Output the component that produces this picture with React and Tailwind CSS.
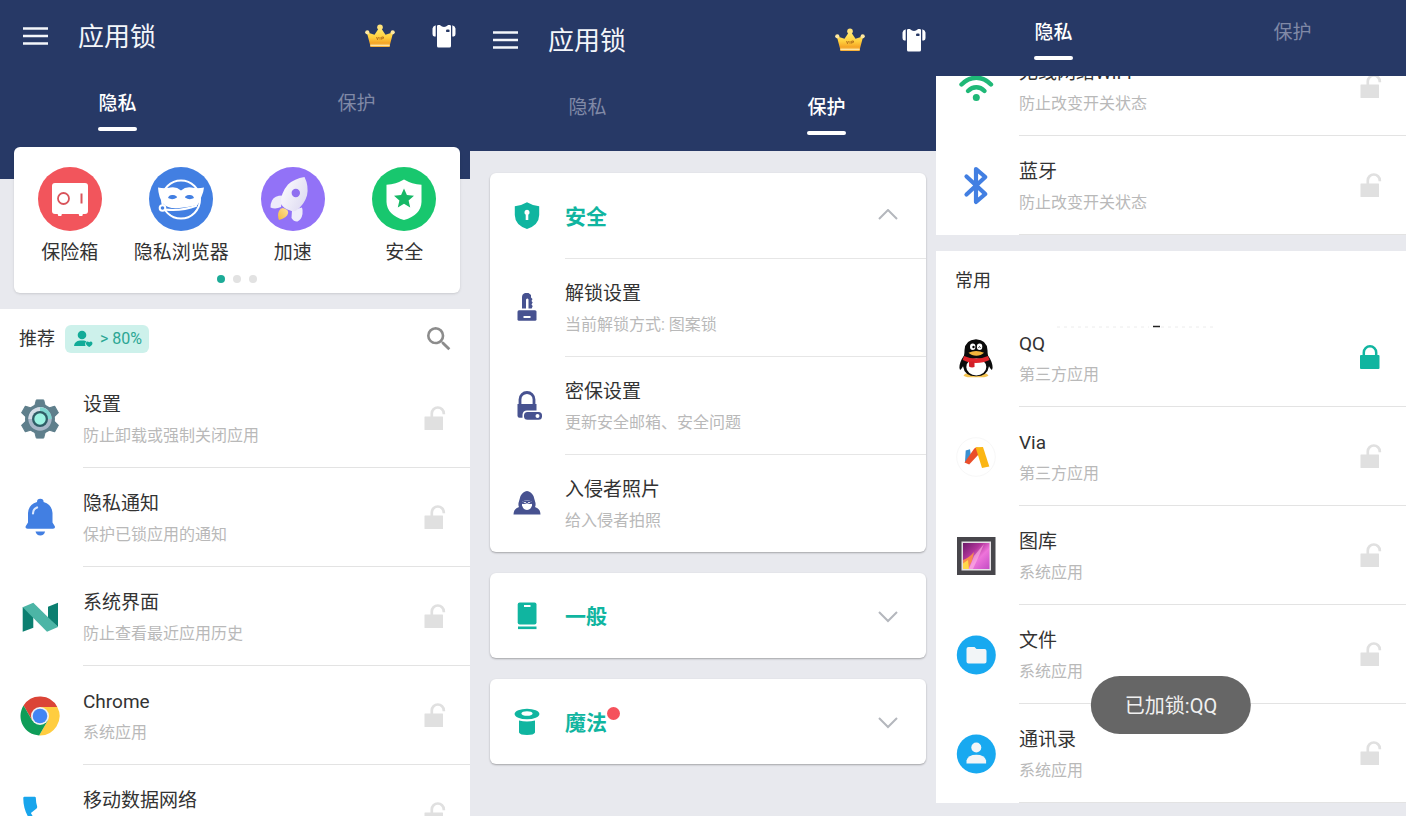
import { useState } from "react";
import { MdSearch } from "react-icons/md";

/* ---------- header icons ---------- */

function CrownIcon() {
  return (
    <svg width="30" height="24" viewBox="0 0 30 24" aria-hidden="true">
      <defs>
        <linearGradient id="crownGold" x1="0" y1="0" x2="0" y2="1">
          <stop offset="0" stopColor="#fff07a" />
          <stop offset="0.600" stopColor="#ffcf3d" />
          <stop offset="1" stopColor="#f39a1f" />
        </linearGradient>
      </defs>
      <path d="M1.800 8.300 9.500 10.800 15 2.500l5.500 8.300 7.700-2.500-3.200 12.200H5z" fill="url(#crownGold)" />
      <circle cx="2.300" cy="8.300" r="2.100" fill="#ffe9a0" />
      <circle cx="15" cy="3.200" r="2.800" fill="#ffe37a" />
      <circle cx="27.700" cy="8.300" r="2.100" fill="#ffe9a0" />
      <rect x="5" y="19.500" width="20" height="3.500" rx="1" fill="#f6b13a" />
      <path d="M5.500 21.300h19" stroke="#ffe9b0" strokeWidth="1.200" />
      <path d="m11.500 13 1 2.700 1-2.700M15 13v2.700M16.700 15.700V13h1.800v1.300h-1.800" fill="none" stroke="#a8641a" strokeWidth="0.800" />
    </svg>
  );
}

function ShirtIcon() {
  return (
    <svg width="24" height="24" viewBox="0 0 24 24" aria-hidden="true" fill="#fff">
      <path d="M5 2Q5.200.8 6.300.9h1.500L10 2.600q2 .8 4 0L16.200.9h1.500Q18.800.8 19 2v20q0 1.500-1.500 1.500h-11Q5 23.500 5 22z" />
      <path d="M3.700 1.200V12.500H2.200Q.5 12 .5 10V4.500Q.8 2 3.700 1.200zM20.300 1.200v11.300h1.500q1.700-.5 1.700-2.500V4.500Q23.200 2 20.300 1.200z" />
      <rect x="14" y="5.500" width="3.600" height="2.600" rx="1.200" fill="#273966" />
    </svg>
  );
}

/* ---------- shortcut icons ---------- */

function SafeIcon() {
  return (
    <svg width="64" height="64" viewBox="0 0 64 64" aria-hidden="true">
      <circle cx="32" cy="32" r="32" fill="#f2555c" />
      <rect x="14" y="16" width="36" height="31" rx="3" fill="#fff" />
      <path d="M19.500 46.500h4.500l-.7 2.500h-3zM40.500 46.500H45l-.7 2.500h-3z" fill="#fff" />
      <circle cx="25.500" cy="31.500" r="5.500" fill="none" stroke="#d9545b" strokeWidth="1.800" />
      <path d="M43.500 26.500v10" stroke="#d9545b" strokeWidth="2" />
    </svg>
  );
}

function MaskIcon() {
  return (
    <svg width="64" height="64" viewBox="0 0 64 64" aria-hidden="true">
      <circle cx="32" cy="32" r="32" fill="#427fe2" />
      <circle cx="32" cy="32.500" r="19" fill="none" stroke="#fff" strokeWidth="2" />
      <path d="M9 20.500q7 1.500 12.500 0 6-1 10.500 3 4.500-4 10.500-3 5.500 1.500 12.500 0-.5 5-2.500 9-2 6-4 8.500-8 2-18 3-12 1-16-4-5-6-5.500-16.500z" fill="#fff" />
      <path d="M19 31q1-3.500 5-3 4 .5 4 2.500-4.500 3-9 .5zM45 31q-1-3.500-5-3-4 .5-4 2.500 4.500 3 9 .5z" fill="#427fe2" />
      <path d="M17.500 43.500q15 2 30-4-3 9-13 10-12 .5-17-6z" fill="#427fe2" />
      <circle cx="13.500" cy="41" r="2.800" fill="#427fe2" stroke="#fff" strokeWidth="2" />
      <path d="M16 42.500q16 2 32-4" fill="none" stroke="#fff" strokeWidth="2" />
    </svg>
  );
}

function RocketIcon() {
  return (
    <svg width="64" height="64" viewBox="0 0 64 64" aria-hidden="true">
      <defs>
        <linearGradient id="rocketBody" x1="0" y1="0" x2="1" y2="0.600">
          <stop offset="0" stopColor="#fff" />
          <stop offset="1" stopColor="#dfdcf2" />
        </linearGradient>
        <linearGradient id="rocketFlame" x1="1" y1="0" x2="0" y2="1">
          <stop offset="0" stopColor="#ffe39a" />
          <stop offset="1" stopColor="#f5b942" />
        </linearGradient>
      </defs>
      <circle cx="32" cy="32" r="32" fill="#9272f7" />
      <path d="M21.500 28.500q-8 0-10.500 5-2 4-1.500 7 5 2 10.500-.5zM31 43l-.5 8q2.500 4 6 3.500 4-2 5-7.500.5-4-.5-6.500z" fill="#eeecfb" />
      <path d="M18 44q2-4 5.500-2.500 4.500 1.500 3.500 5-1 4-9 6.500-2-5 0-9z" fill="url(#rocketFlame)" />
      <path d="M43.500 10q4.500 9 2.500 18.500-3 10-11.500 15.500-3 .5-6-.7-6-2-8.500-6.300-.5-11 7-19.500Q33.500 11.500 43.500 10z" fill="url(#rocketBody)" />
      <circle cx="34.800" cy="26" r="4.200" fill="#8f6ff0" />
    </svg>
  );
}

function StarShieldIcon() {
  return (
    <svg width="64" height="64" viewBox="0 0 64 64" aria-hidden="true">
      <circle cx="32" cy="32" r="32" fill="#18c76e" />
      <path d="M32 12.500q8 4.700 17.500 5.200V35q-.5 13-17.500 18-17-5-17.500-18V17.700q9.500-.5 17.500-5.200z" fill="#fff" />
      <path d="m32 21.500 2.900 6.600 7.100.7-5.400 4.700 1.600 7-6.200-3.700-6.200 3.700 1.600-7-5.400-4.700 7.100-.7z" fill="#16b866" />
    </svg>
  );
}

/* ---------- list icons (40 x 40) ---------- */

function GearIcon() {
  return (
    <svg width="40" height="40" viewBox="0 0 40 40" aria-hidden="true">
      <g fill="#5f7f8c">
        <circle cx="20" cy="20" r="15" />
        {[0, 60, 120, 180, 240, 300].map((a) => (
          <path key={a} d="M16.300.9h7.400l1.800 7h-11z" strokeLinejoin="round" stroke="#5f7f8c" strokeWidth="1" transform={`rotate(${a} 20 20)`} />
        ))}
      </g>
      <circle cx="20" cy="20" r="11.700" fill="#a9b7c8" />
      <path d="M8.300 20a11.700 11.700 0 0 1 20-8.300L20 20z" fill="#d5dde6" />
      <path d="M20 8.300A11.700 11.700 0 0 1 31.700 20H20z" fill="#7fd6d0" />
      <circle cx="20" cy="20" r="8" fill="#2f5d66" />
      <circle cx="20" cy="20" r="5.700" fill="#9cf3e2" />
    </svg>
  );
}

function BellIcon() {
  return (
    <svg width="40" height="40" viewBox="0 0 40 40" aria-hidden="true">
      <path d="M17 4a3.300 3.300 0 0 1 6.600 0q8.400 2.500 8.900 11v9.500l2.300 3.700q.8 2.500-1.800 2.500H7.500q-2.600 0-1.800-2.500L8 24.500V15q.5-8.500 9-11z" fill="#427fe2" />
      <path d="M15.500 33.500h9.600q-1 4-4.800 4t-4.800-4z" fill="#427fe2" />
      <path d="M13 15.500q0-4.500 4-6" fill="none" stroke="#dbe8ff" strokeWidth="2.200" strokeLinecap="round" />
    </svg>
  );
}

function NougatIcon() {
  return (
    <svg width="40" height="40" viewBox="0 0 40 40" aria-hidden="true">
      <path d="M2.700 10 13.300 16v14.700L2.700 34.700z" fill="#0b7f70" />
      <path d="M28 9.700 38 5.700V30L28 21z" fill="#0b7f70" />
      <path d="M2.700 10.300 13.300 5.700 38 30l-11 4.700z" fill="#4cb5a6" />
    </svg>
  );
}

function ChromeIcon() {
  return (
    <svg width="40" height="40" viewBox="0 0 40 40" aria-hidden="true">
      <path d="M12.200 24.500 3.550 9.520A19.500 19.500 0 0 1 37.300 11H20z" fill="#db4437" />
      <path d="M20 11h17.300a19.500 19.500 0 0 1-18.160 28.480L27.790 24.500z" fill="#ffcd40" />
      <path d="M27.790 24.500 19.140 39.480A19.500 19.500 0 0 1 3.550 9.520L12.200 24.500z" fill="#0f9d58" />
      <circle cx="20" cy="20" r="9" fill="#f1f1f1" />
      <circle cx="20" cy="20" r="7.300" fill="#4285f4" />
    </svg>
  );
}

function PhoneIcon() {
  return (
    <svg width="40" height="40" viewBox="0 0 40 40" aria-hidden="true">
      <path
        transform="translate(-3 -4.600) scale(2.100)"
        fill="#18a5ec"
        d="M6.620 10.790c1.440 2.830 3.760 5.140 6.590 6.590l2.200-2.200c.27-.27.67-.36 1.020-.24 1.120.37 2.330.57 3.570.57.55 0 1 .45 1 1V20c0 .55-.45 1-1 1C10.610 21 3 13.390 3 4c0-.55.0-1 .5-1h5c.4 0 .5.450.5 1 0 1.250.2 2.450.57 3.570.11.35.03.74-.25 1.020z"
      />
    </svg>
  );
}

function WifiIcon() {
  return (
    <svg width="40" height="40" viewBox="0 0 40 40" aria-hidden="true" fill="none" stroke="#1fb877" strokeWidth="4.400" strokeLinecap="round">
      <path d="M5.500 17.500Q12 10.700 20.300 10.700T35 17.500" />
      <path d="M12 24q3.700-3.700 8.300-3.700T28.500 24" />
      <circle cx="20.300" cy="30.500" r="3.500" fill="#1fb877" stroke="none" />
    </svg>
  );
}

function BluetoothIcon() {
  return (
    <svg width="40" height="40" viewBox="0 0 40 40" aria-hidden="true">
      <path d="M10.500 10.500 29.300 28 20 36V3l9.300 8-18.800 17.500" fill="none" stroke="#427fe2" strokeWidth="4.200" strokeLinecap="round" strokeLinejoin="round" />
    </svg>
  );
}

function PenguinIcon() {
  return (
    <svg width="40" height="40" viewBox="0 0 40 40" aria-hidden="true">
      <path d="M7.500 37.500Q9 34.500 15 35.500h10q6-1 7.500 2-2 2-8 1.700h-9q-6 .3-8-1.700z" fill="#f5c451" />
      <path d="M20 1.300q11 .5 11.500 11 0 3 .5 5.200 4.500 6.500 4.600 12-.3 3-1.400 2-1.200-1.500-2.200-3.200-1.500 10-13 10T7 28.300q-1 1.700-2.200 3.200-1.100 1-1.400-2Q3.500 24 8 17.500q.5-2.200.5-5.200Q9 1.800 20 1.300z" fill="#0b0b0b" />
      <ellipse cx="20.300" cy="29" rx="10" ry="8.500" fill="#fff" />
      <path d="M8 18q12 5 24 0l1.500 4q-6 3-13.500 3T6.700 22z" fill="#e1252c" />
      <path d="M13 23.500h5.500v5.500q-3 1-5.500-.5z" fill="#d11f27" />
      <ellipse cx="16.700" cy="8.800" rx="2.700" ry="3.300" fill="#fff" />
      <ellipse cx="23.600" cy="8.800" rx="2.700" ry="3.300" fill="#fff" />
      <circle cx="17.500" cy="9" r="1.200" />
      <path d="M22.500 9.500q1-1.500 2 0" stroke="#000" fill="none" />
      <path d="M12.500 14.700q7.500-3.500 15.500 0-3 3-7.700 3t-7.800-3z" fill="#f5b53c" />
    </svg>
  );
}

function ViaIcon() {
  return (
    <svg width="40" height="40" viewBox="0 0 40 40" aria-hidden="true">
      <circle cx="20" cy="20" r="19.300" fill="#fff" stroke="#f7f7f7" strokeWidth="1" />
      <path d="M9.700 13.500 14 12.300l1 8L9 25.500z" fill="#3a8fd0" />
      <path d="m8.500 25.500 9.800-14q3-2 5.200.2L23 17l-9.800 10.500z" fill="#ea4f2b" />
      <path d="m19.500 10.300 7.500-.3 6.300 19.500-7.300 1.500z" fill="#fbb614" />
    </svg>
  );
}

function GalleryIcon() {
  return (
    <svg width="40" height="40" viewBox="0 0 40 40" aria-hidden="true">
      <defs>
        <linearGradient id="photo" x1="0" y1="0" x2="1" y2="1">
          <stop offset="0" stopColor="#6b1a68" />
          <stop offset="0.350" stopColor="#b0349a" />
          <stop offset="0.600" stopColor="#ee74da" />
          <stop offset="1" stopColor="#c34cc4" />
        </linearGradient>
      </defs>
      <rect x="1" y="1" width="38.500" height="38" fill="#47464b" />
      <rect x="5.500" y="5.500" width="29.500" height="29" fill="#e6e2e6" />
      <rect x="7" y="7" width="26.500" height="26" fill="url(#photo)" />
      <path d="M7 24q6-2 11-8l-2 9-4 8H7z" fill="#f78a4e" />
      <path d="m13 33 5-13L28 8l-6 14-5 11z" fill="#ffb7e4" opacity="0.600" />
      <path d="M7 27.500 12 24l1 9H7z" fill="#ffd84a" />
    </svg>
  );
}

function FilesIcon() {
  return (
    <svg width="40" height="40" viewBox="0 0 40 40" aria-hidden="true">
      <circle cx="20.300" cy="20" r="19.500" fill="#18a9f0" />
      <path d="M12.500 12h6l2 2h8q2 0 2 2v10.500q0 2-2 2h-16q-2 0-2-2V14q0-2 2-2z" fill="#f2f5f7" />
    </svg>
  );
}

function ContactIcon() {
  return (
    <svg width="40" height="40" viewBox="0 0 40 40" aria-hidden="true">
      <circle cx="20.300" cy="20" r="19.500" fill="#18a9f0" />
      <circle cx="20.300" cy="13.500" r="5" fill="#f2f5f7" />
      <path d="M10.500 29.500v-3q1.500-5.700 9.800-5.700t9.800 5.700v3z" fill="#f2f5f7" />
    </svg>
  );
}

function LockIcon({ locked }) {
  return locked ? (
    <svg width="22" height="26" viewBox="0 0 22 26" aria-hidden="true">
      <path d="M3.800 12V8.500a6.200 6.200 0 0 1 12.400 0V12" fill="none" stroke="#10b5a0" strokeWidth="2.500" />
      <rect x="0" y="11" width="19.500" height="14" rx="1" fill="#10b5a0" />
    </svg>
  ) : (
    <svg width="22" height="26" viewBox="0 0 22 26" aria-hidden="true">
      <path d="M7.800 12V8.500a6 6 0 0 1 12 0v.7" fill="none" stroke="#e0e0e0" strokeWidth="2.700" />
      <rect x="0.500" y="11.500" width="18.500" height="13.500" rx="0.500" fill="#e0e0e0" />
    </svg>
  );
}

/* ---------- protection icons (30 x 30) ---------- */

function KeyholeShieldIcon() {
  return (
    <svg width="30" height="30" viewBox="0 0 30 30" aria-hidden="true">
      <path d="M15 1.200q6 3.600 12.200 4V14q-.2 10-12.200 14Q3 24 2.800 14V5.200q6.200-.4 12.200-4z" fill="#10b5a0" />
      <path d="M15 8.800a2.700 2.700 0 0 1 1.300 5V19h-2.600v-5.200a2.700 2.700 0 0 1 1.300-5z" fill="#fff" />
    </svg>
  );
}

function KeyIcon() {
  return (
    <svg width="30" height="30" viewBox="0 0 30 30" aria-hidden="true">
      <path d="M10 16.500V5Q10 2 13 .9h3.500L19 3v2.500l1.500 1.500-1 2 1.200 1.500-1.200 2 1.200 1.500-1 2.500h-3.200V7.500q-1-2-2.500 0v9z" fill="#475290" />
      <rect x="5.500" y="18.300" width="19" height="10.500" rx="1.500" fill="#475290" />
      <path d="M11.500 25h7" stroke="#fff" strokeWidth="2" />
    </svg>
  );
}

function LockCardIcon() {
  return (
    <svg width="30" height="30" viewBox="0 0 30 30" aria-hidden="true">
      <path d="M8 14V9.500a7 7 0 0 1 14 0V14" fill="none" stroke="#475290" strokeWidth="2.800" />
      <path d="M5.500 14h19v6.500H15q-4 0-4.500 4v3.300h-3q-2 0-2-2z" fill="#475290" />
      <rect x="12" y="22" width="18" height="7.800" rx="3.500" fill="#475290" />
      <circle cx="25.500" cy="25.900" r="2" fill="#fff" />
    </svg>
  );
}

function IntruderIcon() {
  return (
    <svg width="30" height="30" viewBox="0 0 30 30" aria-hidden="true">
      <path d="M15 3q4 .5 6.500 5l2 7q.3 3-.5 4 5.300 1.500 5.500 7.500h-27q.2-6 5.500-7.500-.8-1-.5-4l2-7Q11 3.500 15 3z" fill="#475290" />
      <path d="M10 13.500q5-2 10 0v4q-1.500 4.500-5 4.500t-5-4.500z" fill="#fff" />
      <path d="M9.500 13.500q5.500-1.500 11 0v2q-2.800 1.200-5.500-.3-2.700 1.500-5.500.3z" fill="#475290" />
      <path d="M11.800 14.500h2.200M16 14.500h2.200" stroke="#fff" strokeWidth="0.800" />
    </svg>
  );
}

function DeviceIcon() {
  return (
    <svg width="30" height="30" viewBox="0 0 30 30" aria-hidden="true">
      <rect x="5.700" y="1.500" width="18.800" height="22" rx="2" fill="#10b5a0" />
      <path d="M12 5h6.500" stroke="#fff" strokeWidth="2" />
      <path d="M6 26.800h18.500" stroke="#10b5a0" strokeWidth="2.600" />
    </svg>
  );
}

function HatIcon() {
  return (
    <svg width="30" height="30" viewBox="0 0 30 30" aria-hidden="true">
      <ellipse cx="15" cy="7" rx="12.400" ry="5.300" fill="#10b5a0" />
      <ellipse cx="15" cy="6.500" rx="5.500" ry="2.300" fill="#fff" />
      <path d="M7 13.500q8 2 16 0v12q-1 2.500-8 2.500t-8-2.500z" fill="#10b5a0" />
    </svg>
  );
}

function Chevron({ up }) {
  return (
    <svg width="20" height="14" viewBox="0 0 20 14" aria-hidden="true" fill="none" stroke="#b4b7bd" strokeWidth="2">
      <path d={up ? "m1 10 9-9 9 9" : "m1 3 9 9 9-9"} />
    </svg>
  );
}

/* ---------- shared parts ---------- */

function AppBar() {
  return (
    <div className="flex h-[71px] items-center pr-[14px] pl-[23px]">
      <button type="button" aria-label="菜单">
        <svg width="25" height="18" viewBox="0 0 25 18" aria-hidden="true" stroke="#f4f6fa" strokeWidth="2.600">
          <path d="M0 1.500h25M0 9h25M0 16.500h25" />
        </svg>
      </button>
      <h1 className="ml-[30px] flex-1 pt-[2px] text-[26px] leading-[36px] text-[#f4f6fa]">应用锁</h1>
      <button type="button" aria-label="VIP" className="mr-[37px]">
        <CrownIcon />
      </button>
      <button type="button" aria-label="主题">
        <ShirtIcon />
      </button>
    </div>
  );
}

function Tabs({ active }) {
  return (
    <nav className="grid h-[76px] grid-cols-2">
      {["隐私", "保护"].map((label, i) => (
        <div key={label} className={i === 1 ? "flex justify-center pl-2" : "flex justify-center"}>
          <a
            href={i === 0 ? "#privacy" : "#protection"}
            className={
              label === active
                ? "flex flex-col pt-[19px] text-[19px] leading-[28px] font-medium text-white"
                : "flex flex-col pt-[19px] text-[19px] leading-[28px] text-[#8089a6]"
            }
          >
            {label}
            {label === active && <span className="mt-[9px] h-1 rounded-sm bg-white" />}
          </a>
        </div>
      ))}
    </nav>
  );
}

function AppRow({ icon, name, note, initiallyLocked = false }) {
  const [locked, setLocked] = useState(initiallyLocked);
  return (
    <li className="flex h-[99px] items-center pl-5">
      <span className="size-10 shrink-0">{icon}</span>
      <div className="ml-[23px] flex flex-1 items-center self-stretch border-b border-[#e3e3e3] pr-6">
        <div className="flex-1 self-stretch pt-[22px]">
          <h3 className="text-[19px] leading-[28px] text-[#333]">{name}</h3>
          <p className="mt-[5px] text-[16px] leading-[24px] text-[#b9b9b9]">{note}</p>
        </div>
        <button type="button" aria-label={`${locked ? "解锁" : "加锁"} ${name}`} aria-pressed={locked} onClick={() => setLocked(!locked)}>
          <LockIcon locked={locked} />
        </button>
      </div>
    </li>
  );
}

/* ---------- panels ---------- */

const shortcuts = [
  { label: "保险箱", icon: <SafeIcon /> },
  { label: "隐私浏览器", icon: <MaskIcon /> },
  { label: "加速", icon: <RocketIcon /> },
  { label: "安全", icon: <StarShieldIcon /> },
];

function PrivacyPanel() {
  return (
    <section className="min-w-0 overflow-hidden bg-[#e8e9ee]">
      <header className="bg-[#273966] pb-8">
        <AppBar />
        <Tabs active="隐私" />
      </header>
      <div className="relative -mt-8 mr-[10px] mb-4 ml-[14px] rounded-md bg-white pt-5 pb-[10px] shadow-sm">
        <div className="grid grid-cols-4">
          {shortcuts.map((s) => (
            <button key={s.label} type="button" className="flex flex-col items-center gap-2 text-[19px] leading-[28px] whitespace-nowrap text-[#333]">
              {s.icon}
              {s.label}
            </button>
          ))}
        </div>
        <div className="mt-2 flex justify-center gap-2">
          <span className="size-2 rounded-full bg-[#1cab97]" />
          <span className="size-2 rounded-full bg-[#e2e2e2]" />
          <span className="size-2 rounded-full bg-[#e2e2e2]" />
        </div>
      </div>
      <div className="bg-white">
        <div className="flex h-[60px] items-center pr-[15px] pl-[19px]">
          <h2 className="text-[18px] leading-[28px] text-[#333]">推荐</h2>
          <span className="ml-[10px] flex h-7 items-center gap-[7px] rounded-md bg-[#cdf1eb] pr-[7px] pl-2 text-[16px] text-[#2ba693]">
            <svg width="20" height="18" viewBox="0 0 20 18" aria-hidden="true" fill="#12ab98">
              <circle cx="9" cy="5" r="4.300" />
              <path d="M1 16q.5-5 6-5.500h4q1.800.3 2.500 1-2 1.500-1 4.500z" />
              <path d="M16.200 17q-3.700-2-3.200-4.300 1.200-2 3.200-.4 2-1.600 3.200.4.500 2.300-3.200 4.300z" />
            </svg>
            <span>&gt; 80%</span>
          </span>
          <button type="button" aria-label="搜索" className="ml-auto">
            <MdSearch size={32} color="#8c8c8c" />
          </button>
        </div>
        <ul>
          <AppRow icon={<GearIcon />} name="设置" note="防止卸载或强制关闭应用" />
          <AppRow icon={<BellIcon />} name="隐私通知" note="保护已锁应用的通知" />
          <AppRow icon={<NougatIcon />} name="系统界面" note="防止查看最近应用历史" />
          <AppRow icon={<ChromeIcon />} name="Chrome" note="系统应用" />
          <AppRow icon={<PhoneIcon />} name="移动数据网络" note="防止改变开关状态" />
        </ul>
      </div>
    </section>
  );
}

function GroupHeader({ icon, title, open = false, dot = false }) {
  return (
    <button type="button" aria-expanded={open} className="flex h-[85px] w-full items-center pr-7 pl-[22px]">
      {icon}
      <span className="relative ml-[23px] pt-[2px] text-[21px] leading-[32px] font-bold text-[#10b5a0]">
        {title}
        {dot && <span className="absolute top-[2px] left-full size-[13px] rounded-full bg-[#f5525c]" />}
      </span>
      <span className="ml-auto">
        <Chevron up={open} />
      </span>
    </button>
  );
}

const securityItems = [
  { icon: <KeyIcon />, name: "解锁设置", note: "当前解锁方式: 图案锁" },
  { icon: <LockCardIcon />, name: "密保设置", note: "更新安全邮箱、安全问题" },
  { icon: <IntruderIcon />, name: "入侵者照片", note: "给入侵者拍照" },
];

const cardClass = "rounded-md bg-white shadow-[0_1px_2px_rgba(0,0,0,0.3)]";

function ProtectionPanel() {
  return (
    <section className="min-w-0 overflow-hidden bg-[#e8e9ee]">
      <header className="-mr-1 bg-[#273966] pt-1">
        <AppBar />
        <Tabs active="保护" />
      </header>
      <div className="flex flex-col gap-[21px] pt-[22px] pr-[10px] pl-5">
        <div className={cardClass}>
          <GroupHeader icon={<KeyholeShieldIcon />} title="安全" open />
          <ul>
            {securityItems.map((item) => (
              <li key={item.name} className="flex h-[98px] items-center pl-[22px]">
                {item.icon}
                <div className="ml-[23px] flex-1 self-stretch border-t border-[#e6e6e6] pt-[21px]">
                  <h3 className="text-[19px] leading-[28px] text-[#333]">{item.name}</h3>
                  <p className="mt-[5px] text-[16px] leading-[24px] text-[#b9b9b9]">{item.note}</p>
                </div>
              </li>
            ))}
          </ul>
        </div>
        <div className={cardClass}>
          <GroupHeader icon={<DeviceIcon />} title="一般" />
        </div>
        <div className={cardClass}>
          <GroupHeader icon={<HatIcon />} title="魔法" dot />
        </div>
      </div>
    </section>
  );
}

function AppListPanel() {
  return (
    <section className="relative flex min-w-0 flex-col overflow-hidden bg-[#e8e9ee]">
      <header className="shrink-0 bg-[#273966]">
        <Tabs active="隐私" />
      </header>
      <div className="min-h-0 flex-1 overflow-hidden">
        <ul className="-mt-[39px] bg-white">
          <AppRow icon={<WifiIcon />} name="无线网络WiFi" note="防止改变开关状态" />
          <AppRow icon={<BluetoothIcon />} name="蓝牙" note="防止改变开关状态" />
        </ul>
        <div className="relative mt-4 bg-white">
          <h2 className="flex h-[57px] items-center pt-[2px] pl-[19px] text-[18px] leading-[28px] text-[#333]">常用</h2>
          <svg className="absolute top-[74px] left-[119px]" width="160" height="3" viewBox="0 0 160 3" aria-hidden="true">
            <path d="M2 2h92M106 2h52" stroke="#ececec" strokeWidth="1" strokeDasharray="3 4" />
            <path d="M98 1.500h7" fill="none" stroke="#222" strokeWidth="1.500" />
          </svg>
          <ul>
            <AppRow icon={<PenguinIcon />} name="QQ" note="第三方应用" initiallyLocked />
            <AppRow icon={<ViaIcon />} name="Via" note="第三方应用" />
            <AppRow icon={<GalleryIcon />} name="图库" note="系统应用" />
            <AppRow icon={<FilesIcon />} name="文件" note="系统应用" />
            <AppRow icon={<ContactIcon />} name="通讯录" note="系统应用" />
          </ul>
        </div>
      </div>
      <div role="status" className="absolute bottom-[82px] left-1/2 -translate-x-1/2 rounded-full bg-[#666] px-[34px] pt-[15px] pb-[13px] text-[20px] leading-[30px] whitespace-nowrap text-[#f0f0f0]">
        已加锁:QQ
      </div>
    </section>
  );
}

export default function App() {
  return (
    <main lang="zh-CN" className="grid h-screen grid-cols-[470fr_466fr_470fr] overflow-hidden bg-[#e8e9ee] font-[Roboto,'Noto_Sans_CJK_SC',sans-serif]">
      <PrivacyPanel />
      <ProtectionPanel />
      <AppListPanel />
    </main>
  );
}
